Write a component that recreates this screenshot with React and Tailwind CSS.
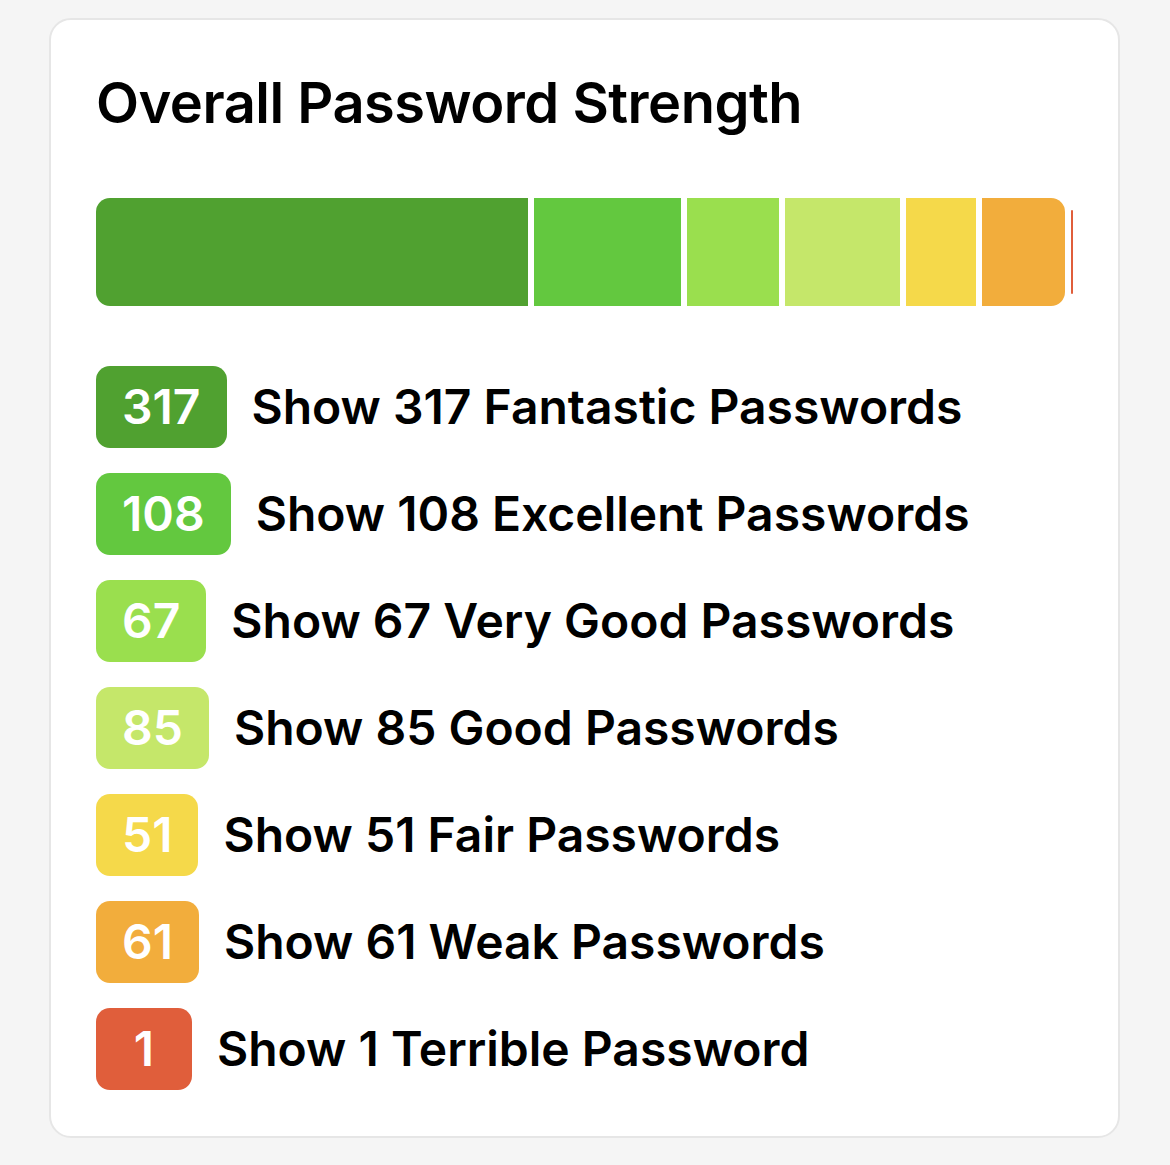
const tiers = [
  { count: 317, label: 'Show 317 Fantastic Passwords', color: 'bg-[#50a130]' },
  { count: 108, label: 'Show 108 Excellent Passwords', color: 'bg-[#63c83f]' },
  { count: 67, label: 'Show 67 Very Good Passwords', color: 'bg-[#9adf4e]' },
  { count: 85, label: 'Show 85 Good Passwords', color: 'bg-[#c5e76a]' },
  { count: 51, label: 'Show 51 Fair Passwords', color: 'bg-[#f5d94a]' },
  { count: 61, label: 'Show 61 Weak Passwords', color: 'bg-[#f2ad3c]' },
  { count: 1, label: 'Show 1 Terrible Password', color: 'bg-[#e05e3b]' },
];

const App = () => {
  const last = tiers.length - 1;

  return (
    <div
      className="min-h-screen bg-[#f5f5f5] pt-[18px] pl-[49px] pr-[50px]"
      style={{ fontFamily: 'Inter, "Noto Sans", sans-serif' }}
    >
      <div className="bg-white border-2 border-[#e6e6e6] rounded-[22px] px-[45px] pt-[48px] pb-[46px] h-[1120px]">
        <h2 className="text-[56px] leading-[70px] font-semibold text-black tracking-[-0.5px]">
          Overall Password Strength
        </h2>

        {/* Strength bar */}
        <div className="mt-[60px] flex gap-[6px] h-[108px]">
          {tiers.map((t, i) => (
            <div
              key={t.count}
              className={`${t.color} ${i === 0 ? 'rounded-l-[14px]' : ''} ${i === last - 1 ? 'rounded-r-[14px]' : ''} ${i === last ? 'my-[12px] rounded-full' : ''}`}
              style={{ flexGrow: t.count, flexBasis: 0, minWidth: i === last ? 2 : 0 }}
            />
          ))}
        </div>

        {/* Tier list */}
        <div className="mt-[60px] flex flex-col gap-[25px]">
          {tiers.map((t) => (
            <div key={t.count} className="flex items-center gap-[25px]">
              <span
                className={`${t.color} h-[82px] min-w-[96px] px-[26px] rounded-[14px] flex items-center justify-center text-white text-[48px] font-semibold`}
              >
                {t.count}
              </span>
              <span className="text-[48px] font-semibold text-black">{t.label}</span>
            </div>
          ))}
        </div>
      </div>
    </div>
  );
};

export default App;
